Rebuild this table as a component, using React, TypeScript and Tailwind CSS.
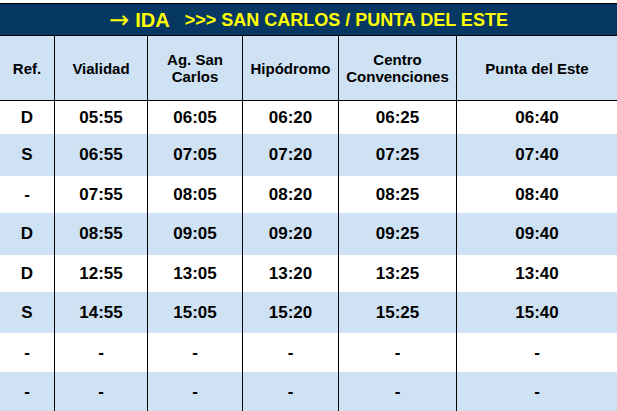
const cols = "grid grid-cols-[54px_93px_95px_96px_118px_1fr]";

type Row = { ref: string; times: string[]; h: string; bg: string };

const rows: Row[] = [
  { ref: "D", times: ["05:55", "06:05", "06:20", "06:25", "06:40"], h: "h-[33px]", bg: "bg-white" },
  { ref: "S", times: ["06:55", "07:05", "07:20", "07:25", "07:40"], h: "h-[42px]", bg: "bg-[#cfe2f3]" },
  { ref: "-", times: ["07:55", "08:05", "08:20", "08:25", "08:40"], h: "h-[37px]", bg: "bg-white" },
  { ref: "D", times: ["08:55", "09:05", "09:20", "09:25", "09:40"], h: "h-[42px]", bg: "bg-[#cfe2f3]" },
  { ref: "D", times: ["12:55", "13:05", "13:20", "13:25", "13:40"], h: "h-[37px]", bg: "bg-white" },
  { ref: "S", times: ["14:55", "15:05", "15:20", "15:25", "15:40"], h: "h-[41px]", bg: "bg-[#cfe2f3]" },
  { ref: "-", times: ["-", "-", "-", "-", "-"], h: "h-[39px]", bg: "bg-white" },
  { ref: "-", times: ["-", "-", "-", "-", "-"], h: "h-[39px]", bg: "bg-[#cfe2f3]" },
];

const headers = ["Vialidad", "Ag. San Carlos", "Hipódromo", "Centro Convenciones", "Punta del Este"];

export default function App() {
  return (
    <div className="w-[617px] h-[411px] overflow-hidden bg-white pt-[3px] font-['Liberation_Sans',Arial,sans-serif] font-bold text-black">
      {/* title band */}
      <div className="h-[33px] bg-[#073763] border-y border-black flex items-center justify-center text-[#ffff00]">
        <span className="font-['DejaVu_Sans',sans-serif] text-[24px] font-normal leading-none">→</span>
        <span className="text-[20px] leading-none ml-[6px]">IDA</span>
        <span className="text-[18px] leading-none ml-[15px]">&gt;&gt;&gt; SAN CARLOS / PUNTA DEL ESTE</span>
      </div>

      {/* column headers */}
      <div className={`${cols} h-[65px] bg-[#cfe2f3] border-b border-black text-[15px] leading-[17px]`}>
        <div className="flex items-center justify-center text-center">Ref.</div>
        {headers.map((h) => (
          <div key={h} className="flex items-center justify-center text-center border-l border-black px-1">
            {h === "Ag. San Carlos" ? (
              <span>Ag. San<br />Carlos</span>
            ) : h === "Centro Convenciones" ? (
              <span>Centro<br />Convenciones</span>
            ) : (
              h
            )}
          </div>
        ))}
      </div>

      {/* schedule rows */}
      {rows.map((r, i) => (
        <div key={i} className={`${cols} ${r.h} ${r.bg} text-[17px]`}>
          <div className="flex items-center justify-center">{r.ref}</div>
          {r.times.map((t, j) => (
            <div key={j} className="flex items-center justify-center border-l border-black">
              {t}
            </div>
          ))}
        </div>
      ))}
    </div>
  );
}
